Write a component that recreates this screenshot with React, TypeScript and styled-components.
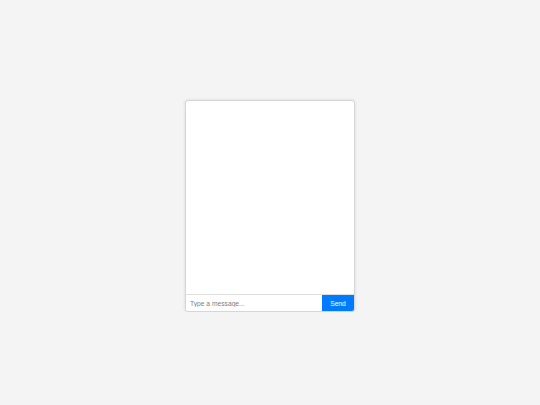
import styled, { createGlobalStyle } from "styled-components";

const GlobalStyle = createGlobalStyle`
  html, body {
    margin: 0;
    padding: 0;
    background: #f4f4f4;
    font-family: 'Liberation Sans', Arial, sans-serif;
  }
`;

export default function App() {
  return (
    <>
      <GlobalStyle />
      <Page>
        <ChatBox>
          <Messages />
          <InputRow>
            <MessageInput placeholder="Type a message..." />
            <SendButton>Send</SendButton>
          </InputRow>
        </ChatBox>
      </Page>
    </>
  );
}

const Page = styled.div`
  display: flex;
  justify-content: center;
  padding-top: 100px;
`;

const ChatBox = styled.div`
  width: 170px;
  height: 212px;
  box-sizing: border-box;
  display: flex;
  flex-direction: column;
  background: #fff;
  border: 1px solid #d6d6d6;
  border-radius: 3px;
  box-shadow: 0 0 3px rgba(0, 0, 0, 0.12);
  overflow: hidden;
`;

const Messages = styled.div`
  flex: 1;
  overflow-y: auto;
`;

const InputRow = styled.div`
  display: flex;
  height: 16px;
  border-top: 1px solid #dedede;
`;

const MessageInput = styled.input`
  flex: 1;
  min-width: 0;
  border: none;
  outline: none;
  padding: 0 4px;
  font-family: 'Liberation Sans', Arial, sans-serif;
  font-size: 6.7px;
  color: #333;

  &::placeholder {
    color: #808080;
  }
`;

const SendButton = styled.button`
  width: 32px;
  border: none;
  padding: 0;
  background: #007bff;
  color: #fff;
  font-family: 'Liberation Sans', Arial, sans-serif;
  font-size: 6.7px;
  cursor: pointer;
`;
